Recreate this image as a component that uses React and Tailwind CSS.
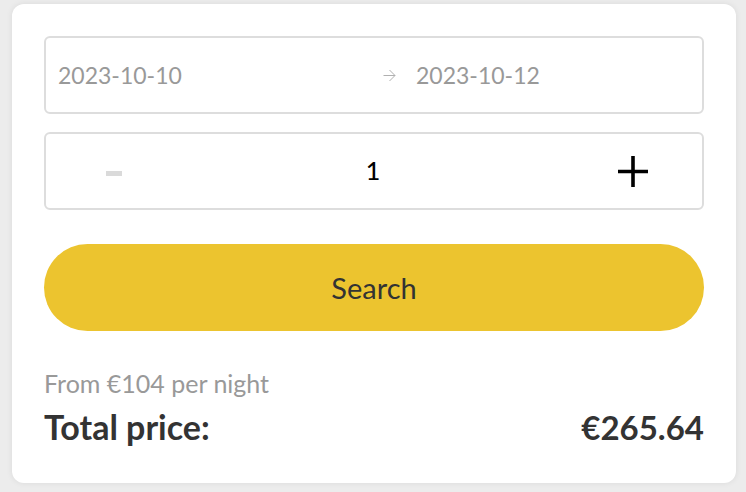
import React, { useState } from 'react'

const font = { fontFamily: 'Lato, "Noto Sans", sans-serif' }

const App = () => {
  const [guests, setGuests] = useState(1)

  return (
    <div className="min-h-screen bg-[#ececec] pl-3 pr-[10px] pt-1" style={font}>
      <div className="bg-white rounded-xl shadow-[0_0_6px_rgba(0,0,0,0.08)] px-8 pt-8 h-[479px]">
        {/* Dates */}
        <div className="h-[78px] border-2 border-[#dddddd] rounded-md flex items-center px-3 text-[23px] text-[#999999]">
          <div className="w-[325px]">2023-10-10</div>
          <svg width="13" height="13" viewBox="0 0 13 13" className="text-[#b0b0b0]">
            <path d="M0.5 6.5h11.5M6.5 1l5.5 5.5-5.5 5.5" fill="none" stroke="currentColor" strokeWidth="1" />
          </svg>
          <div className="ml-5">2023-10-12</div>
        </div>

        {/* Guests stepper */}
        <div className="mt-[18px] h-[78px] border-2 border-[#dddddd] rounded-md flex items-center">
          <button
            type="button"
            onClick={() => setGuests(Math.max(1, guests - 1))}
            className="w-[136px] h-full flex items-center justify-center"
          >
            <span className="block w-4 h-[5px] mt-1 bg-[#dadada]" />
          </button>
          <div className="flex-1 text-center text-[25px] font-medium text-black">{guests}</div>
          <button
            type="button"
            onClick={() => setGuests(guests + 1)}
            className="w-[138px] h-full flex items-center justify-center"
          >
            <svg width="30" height="31" viewBox="0 0 30 31">
              <path d="M15 0v31M0 15.5h30" stroke="black" strokeWidth="3.6" />
            </svg>
          </button>
        </div>

        {/* Search */}
        <button
          type="button"
          className="mt-[34px] w-full h-[87px] rounded-full bg-[#ecc42f] text-[#333333] text-[29px]"
        >
          Search
        </button>

        <div className="mt-[38px] text-[25px] leading-[28px] text-[#999999]">From €104 per night</div>
        <div className="mt-[10px] flex items-center justify-between leading-[40px] font-bold text-[#333333]">
          <span className="text-[34px]">Total price:</span>
          <span className="text-[33px]">€265.64</span>
        </div>
      </div>
    </div>
  )
}

export default App
